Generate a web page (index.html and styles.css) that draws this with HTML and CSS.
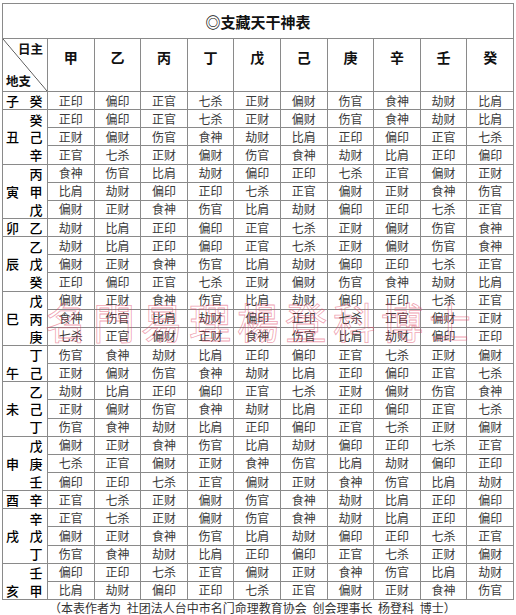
FILE: index.html
```html
<!DOCTYPE html>
<html lang="zh">
<head>
<meta charset="utf-8">
<title>支藏天干神表</title>
<link rel="stylesheet" href="styles.css">
</head>
<body>
<div class="page">
  <div class="table">
    <div class="title">◎支藏天干神表</div>
    <div class="corner"><span class="rz">日主</span><span class="dz">地支</span></div>
    <div class="hd">甲</div><div class="hd">乙</div><div class="hd">丙</div><div class="hd">丁</div><div class="hd">戊</div><div class="hd">己</div><div class="hd">庚</div><div class="hd">辛</div><div class="hd">壬</div><div class="hd">癸</div>

    <div class="side r1"><span class="b">子</span><span class="s">癸</span></div>
    <div class="c">正印</div><div class="c">偏印</div><div class="c">正官</div><div class="c">七杀</div><div class="c">正财</div><div class="c">偏财</div><div class="c">伤官</div><div class="c">食神</div><div class="c">劫财</div><div class="c">比肩</div>

    <div class="side r3"><span class="b">丑</span><span class="s">癸</span><span class="s">己</span><span class="s">辛</span></div>
    <div class="c">正印</div><div class="c">偏印</div><div class="c">正官</div><div class="c">七杀</div><div class="c">正财</div><div class="c">偏财</div><div class="c">伤官</div><div class="c">食神</div><div class="c">劫财</div><div class="c">比肩</div>
    <div class="c">正财</div><div class="c">偏财</div><div class="c">伤官</div><div class="c">食神</div><div class="c">劫财</div><div class="c">比肩</div><div class="c">正印</div><div class="c">偏印</div><div class="c">正官</div><div class="c">七杀</div>
    <div class="c">正官</div><div class="c">七杀</div><div class="c">正财</div><div class="c">偏财</div><div class="c">伤官</div><div class="c">食神</div><div class="c">劫财</div><div class="c">比肩</div><div class="c">正印</div><div class="c">偏印</div>

    <div class="side r3"><span class="b">寅</span><span class="s">丙</span><span class="s">甲</span><span class="s">戊</span></div>
    <div class="c">食神</div><div class="c">伤官</div><div class="c">比肩</div><div class="c">劫财</div><div class="c">偏印</div><div class="c">正印</div><div class="c">七杀</div><div class="c">正官</div><div class="c">偏财</div><div class="c">正财</div>
    <div class="c">比肩</div><div class="c">劫财</div><div class="c">偏印</div><div class="c">正印</div><div class="c">七杀</div><div class="c">正官</div><div class="c">偏财</div><div class="c">正财</div><div class="c">食神</div><div class="c">伤官</div>
    <div class="c">偏财</div><div class="c">正财</div><div class="c">食神</div><div class="c">伤官</div><div class="c">比肩</div><div class="c">劫财</div><div class="c">偏印</div><div class="c">正印</div><div class="c">七杀</div><div class="c">正官</div>

    <div class="side r1"><span class="b">卯</span><span class="s">乙</span></div>
    <div class="c">劫财</div><div class="c">比肩</div><div class="c">正印</div><div class="c">偏印</div><div class="c">正官</div><div class="c">七杀</div><div class="c">正财</div><div class="c">偏财</div><div class="c">伤官</div><div class="c">食神</div>

    <div class="side r3"><span class="b">辰</span><span class="s">乙</span><span class="s">戊</span><span class="s">癸</span></div>
    <div class="c">劫财</div><div class="c">比肩</div><div class="c">正印</div><div class="c">偏印</div><div class="c">正官</div><div class="c">七杀</div><div class="c">正财</div><div class="c">偏财</div><div class="c">伤官</div><div class="c">食神</div>
    <div class="c">偏财</div><div class="c">正财</div><div class="c">食神</div><div class="c">伤官</div><div class="c">比肩</div><div class="c">劫财</div><div class="c">偏印</div><div class="c">正印</div><div class="c">七杀</div><div class="c">正官</div>
    <div class="c">正印</div><div class="c">偏印</div><div class="c">正官</div><div class="c">七杀</div><div class="c">正财</div><div class="c">偏财</div><div class="c">伤官</div><div class="c">食神</div><div class="c">劫财</div><div class="c">比肩</div>

    <div class="side r3"><span class="b">巳</span><span class="s">戊</span><span class="s">丙</span><span class="s">庚</span></div>
    <div class="c">偏财</div><div class="c">正财</div><div class="c">食神</div><div class="c">伤官</div><div class="c">比肩</div><div class="c">劫财</div><div class="c">偏印</div><div class="c">正印</div><div class="c">七杀</div><div class="c">正官</div>
    <div class="c">食神</div><div class="c">伤官</div><div class="c">比肩</div><div class="c">劫财</div><div class="c">偏印</div><div class="c">正印</div><div class="c">七杀</div><div class="c">正官</div><div class="c">偏财</div><div class="c">正财</div>
    <div class="c">七杀</div><div class="c">正官</div><div class="c">偏财</div><div class="c">正财</div><div class="c">食神</div><div class="c">伤官</div><div class="c">比肩</div><div class="c">劫财</div><div class="c">偏印</div><div class="c">正印</div>

    <div class="side r2"><span class="b">午</span><span class="s">丁</span><span class="s">己</span></div>
    <div class="c">伤官</div><div class="c">食神</div><div class="c">劫财</div><div class="c">比肩</div><div class="c">正印</div><div class="c">偏印</div><div class="c">正官</div><div class="c">七杀</div><div class="c">正财</div><div class="c">偏财</div>
    <div class="c">正财</div><div class="c">偏财</div><div class="c">伤官</div><div class="c">食神</div><div class="c">劫财</div><div class="c">比肩</div><div class="c">正印</div><div class="c">偏印</div><div class="c">正官</div><div class="c">七杀</div>

    <div class="side r3"><span class="b">未</span><span class="s">乙</span><span class="s">己</span><span class="s">丁</span></div>
    <div class="c">劫财</div><div class="c">比肩</div><div class="c">正印</div><div class="c">偏印</div><div class="c">正官</div><div class="c">七杀</div><div class="c">正财</div><div class="c">偏财</div><div class="c">伤官</div><div class="c">食神</div>
    <div class="c">正财</div><div class="c">偏财</div><div class="c">伤官</div><div class="c">食神</div><div class="c">劫财</div><div class="c">比肩</div><div class="c">正印</div><div class="c">偏印</div><div class="c">正官</div><div class="c">七杀</div>
    <div class="c">伤官</div><div class="c">食神</div><div class="c">劫财</div><div class="c">比肩</div><div class="c">正印</div><div class="c">偏印</div><div class="c">正官</div><div class="c">七杀</div><div class="c">正财</div><div class="c">偏财</div>

    <div class="side r3"><span class="b">申</span><span class="s">戊</span><span class="s">庚</span><span class="s">壬</span></div>
    <div class="c">偏财</div><div class="c">正财</div><div class="c">食神</div><div class="c">伤官</div><div class="c">比肩</div><div class="c">劫财</div><div class="c">偏印</div><div class="c">正印</div><div class="c">七杀</div><div class="c">正官</div>
    <div class="c">七杀</div><div class="c">正官</div><div class="c">偏财</div><div class="c">正财</div><div class="c">食神</div><div class="c">伤官</div><div class="c">比肩</div><div class="c">劫财</div><div class="c">偏印</div><div class="c">正印</div>
    <div class="c">偏印</div><div class="c">正印</div><div class="c">七杀</div><div class="c">正官</div><div class="c">偏财</div><div class="c">正财</div><div class="c">食神</div><div class="c">伤官</div><div class="c">比肩</div><div class="c">劫财</div>

    <div class="side r1"><span class="b">酉</span><span class="s">辛</span></div>
    <div class="c">正官</div><div class="c">七杀</div><div class="c">正财</div><div class="c">偏财</div><div class="c">伤官</div><div class="c">食神</div><div class="c">劫财</div><div class="c">比肩</div><div class="c">正印</div><div class="c">偏印</div>

    <div class="side r3"><span class="b">戌</span><span class="s">辛</span><span class="s">戊</span><span class="s">丁</span></div>
    <div class="c">正官</div><div class="c">七杀</div><div class="c">正财</div><div class="c">偏财</div><div class="c">伤官</div><div class="c">食神</div><div class="c">劫财</div><div class="c">比肩</div><div class="c">正印</div><div class="c">偏印</div>
    <div class="c">偏财</div><div class="c">正财</div><div class="c">食神</div><div class="c">伤官</div><div class="c">比肩</div><div class="c">劫财</div><div class="c">偏印</div><div class="c">正印</div><div class="c">七杀</div><div class="c">正官</div>
    <div class="c">伤官</div><div class="c">食神</div><div class="c">劫财</div><div class="c">比肩</div><div class="c">正印</div><div class="c">偏印</div><div class="c">正官</div><div class="c">七杀</div><div class="c">正财</div><div class="c">偏财</div>

    <div class="side r2"><span class="b">亥</span><span class="s">壬</span><span class="s">甲</span></div>
    <div class="c">偏印</div><div class="c">正印</div><div class="c">七杀</div><div class="c">正官</div><div class="c">偏财</div><div class="c">正财</div><div class="c">食神</div><div class="c">伤官</div><div class="c">比肩</div><div class="c">劫财</div>
    <div class="c">比肩</div><div class="c">劫财</div><div class="c">偏印</div><div class="c">正印</div><div class="c">七杀</div><div class="c">正官</div><div class="c">偏财</div><div class="c">正财</div><div class="c">食神</div><div class="c">伤官</div>
  </div>
  <div class="note">（本表作者为 社团法人台中市名门命理教育协会 创会理事长 杨登科 博士）</div>
  <div class="watermark">名門易理楊登科博士</div>
</div>
</body>
</html>
```

FILE: styles.css
```css
* { box-sizing: border-box; }
html, body { margin: 0; padding: 0; background: #fff; }
body {
  font-family: "Noto Sans CJK SC", "Noto Sans CJK TC", sans-serif;
  color: #333;
}
.page {
  position: relative;
  width: 516px;
  padding: 3px 2px 0 2px;
}
.table {
  display: grid;
  width: 512px;
  grid-template-columns: 45px repeat(10, 1fr);
  grid-template-rows: 35px 53px repeat(28, 18.143px);
  border-left: 1px solid #8a8a8a;
  border-top: 1px solid #8a8a8a;
}
.table > div {
  border-right: 1px solid #8a8a8a;
  border-bottom: 1px solid #8a8a8a;
}
.title {
  grid-column: 1 / -1;
  display: flex;
  align-items: center;
  justify-content: center;
  font-size: 15px;
  font-weight: 600;
  color: #111;
  padding-top: 1px;
}
.corner {
  display: flex;
  flex-direction: column;
  justify-content: space-between;
  padding: 2px 4px 2px 3px;
  font-size: 12.5px;
  font-weight: 600;
  color: #111;
  line-height: 16px;
  background: linear-gradient(to top right, transparent calc(50% - 0.7px), #555 50%, transparent calc(50% + 0.7px));
}
.rz { align-self: flex-end; }
.dz { align-self: flex-start; }
.hd {
  display: flex;
  justify-content: center;
  padding-top: 9px;
  font-size: 14px;
  line-height: 18px;
  font-weight: 600;
  color: #111;
}
.side {
  display: grid;
  grid-template-columns: 19px 1fr;
  grid-auto-rows: 1fr;
  font-size: 13px;
  font-weight: 500;
  color: #000;
  line-height: 1;
}
.r1 { grid-row: span 1; }
.r2 { grid-row: span 2; }
.r3 { grid-row: span 3; }
.side .b {
  grid-column: 1;
  grid-row: 2;
  display: flex;
  align-items: center;
  justify-content: center;
}
.r1 .b { grid-row: 1; }
.side .s {
  grid-column: 2;
  display: flex;
  align-items: center;
  justify-content: center;
  padding-left: 3px;
}
.c {
  display: flex;
  align-items: center;
  justify-content: center;
  font-size: 12px;
  line-height: 1;
  color: #3a3a3a;
}
.note {
  padding-left: 47px;
  font-size: 12px;
  line-height: 15px;
  color: #333;
  white-space: nowrap;
  word-spacing: 3px;
}
.watermark {
  position: absolute;
  left: 45px;
  top: 300px;
  font-family: "Noto Sans CJK TC", "Noto Sans CJK SC", sans-serif;
  font-size: 42px;
  line-height: 1;
  letter-spacing: 6px;
  white-space: nowrap;
  color: transparent;
  -webkit-text-stroke: 0.8px rgba(225, 70, 100, 0.5);
  pointer-events: none;
}
```
